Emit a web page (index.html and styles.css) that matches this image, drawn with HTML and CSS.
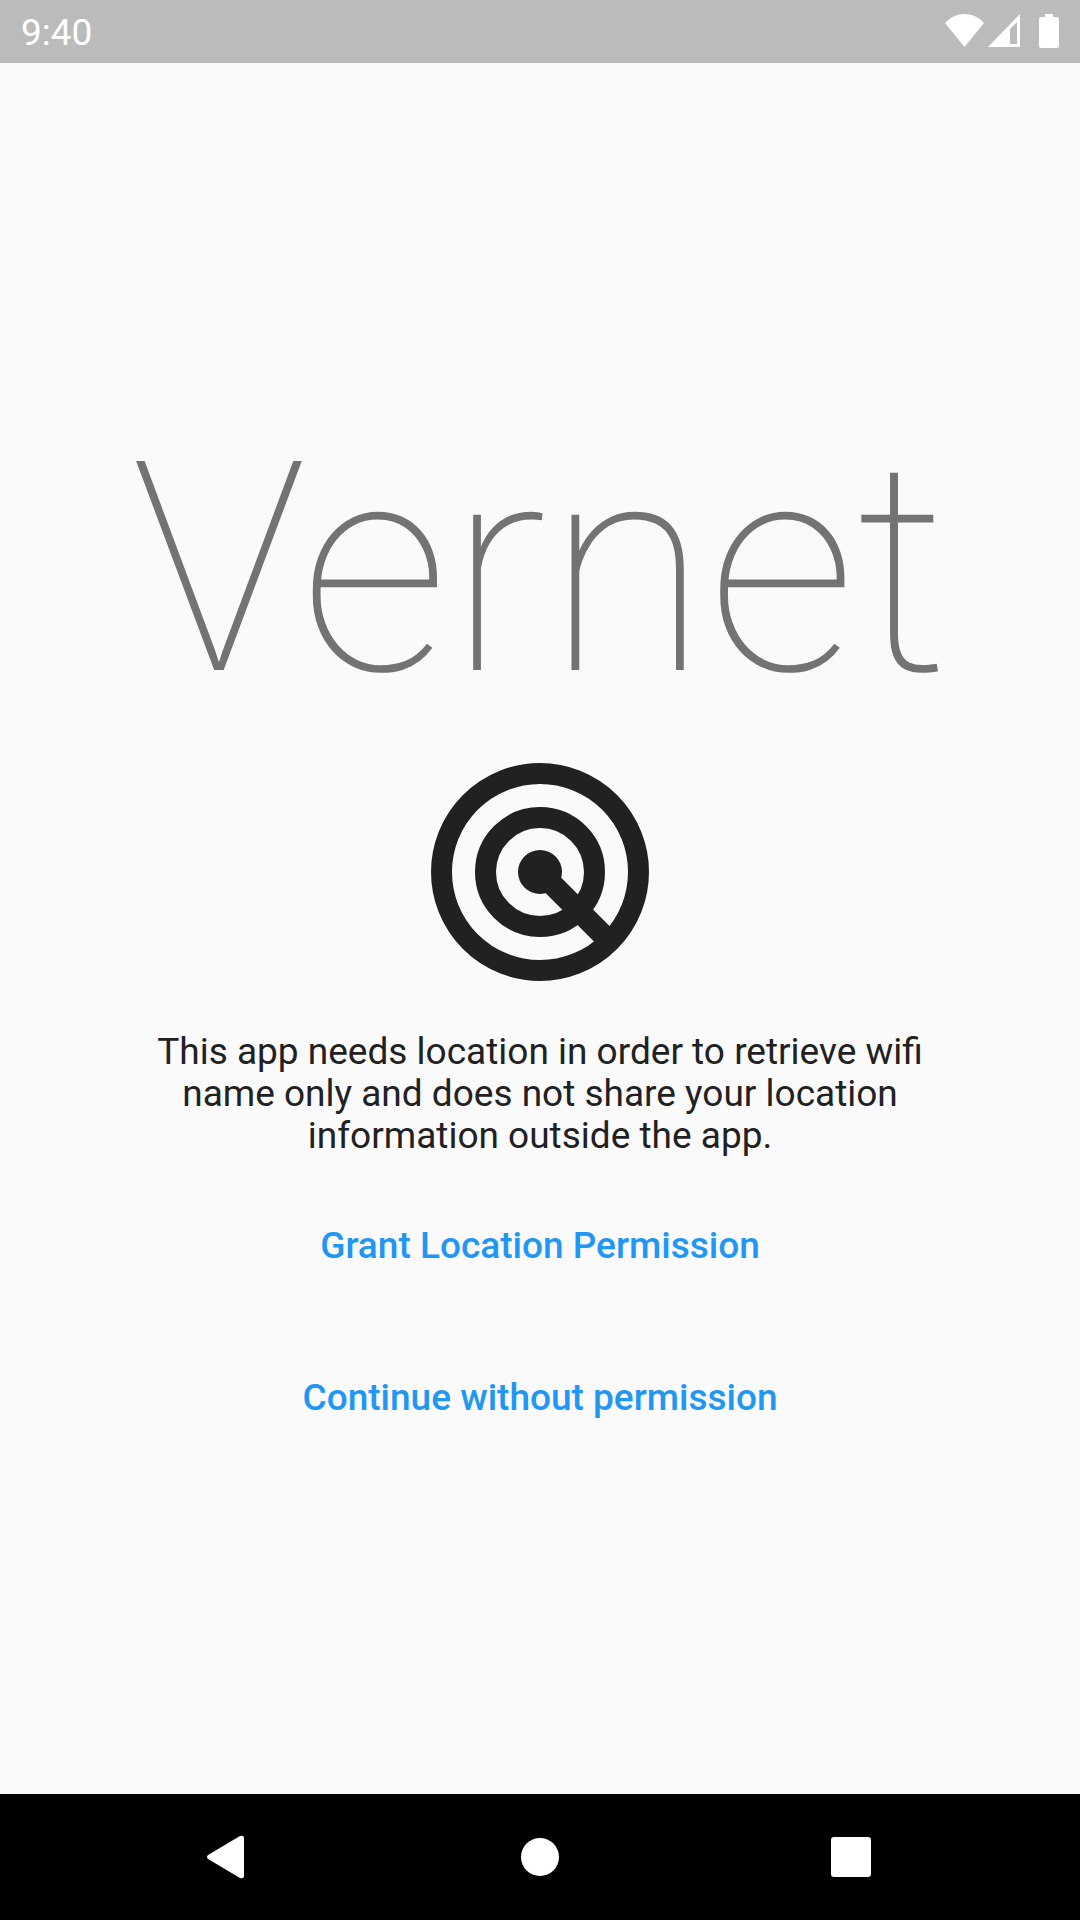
FILE: index.html
```html
<!DOCTYPE html>
<html lang="en">
<head>
<meta charset="utf-8">
<meta name="viewport" content="width=device-width, initial-scale=1">
<title>Vernet</title>
<link rel="stylesheet" href="styles.css">
</head>
<body>
<header class="status">
  <time class="clock">9:40</time>
  <div class="indicators">
    <svg class="wifi" viewBox="0 0 39 33" aria-hidden="true"><path d="M19.500 33 0 9C11-3 28-3 39 9Z"/></svg>
    <svg class="signal" viewBox="0 0 32 33" aria-hidden="true"><path fill-rule="evenodd" d="M0 33 32 0V33ZM22 15V30H29V8Z"/></svg>
    <svg class="battery" viewBox="0 0 20 34" aria-hidden="true"><path d="M6 0h8v3h4q2 0 2 2v27q0 2-2 2H2q-2 0-2-2V5q0-2 2-2h4Z"/></svg>
  </div>
</header>
<main class="content">
  <h1 class="title">Vernet</h1>
  <svg class="logo" viewBox="0 0 218 218" aria-hidden="true">
    <g fill="none" stroke="currentColor" stroke-width="21">
      <circle cx="109" cy="109" r="98.500"/><circle cx="109" cy="109" r="54.500"/><path stroke-width="22" d="M109 109 174 174"/>
    </g>
    <circle cx="109" cy="109" r="22" fill="currentColor"/>
  </svg>
  <p class="message">This app needs location in order to retrieve wifi name only and does not share your location information outside the app.</p>
  <div class="actions">
    <button class="action" type="button">Grant Location Permission</button>
    <button class="action" type="button">Continue without permission</button>
  </div>
</main>
<nav class="navbar" aria-label="System">
  <button class="nav" type="button" aria-label="Back"><svg viewBox="0 0 44 44" aria-hidden="true"><path d="M2 20 34 1q4-1 4 2v38q0 3-4 2L2 24q-2-2 0-4Z"/></svg></button>
  <button class="nav" type="button" aria-label="Home"><svg viewBox="0 0 44 44" aria-hidden="true"><circle cx="22" cy="22" r="19"/></svg></button>
  <button class="nav" type="button" aria-label="Recent apps"><svg viewBox="0 0 44 44" aria-hidden="true"><rect x="1" y="2" width="40" height="40" rx="3"/></svg></button>
</nav>
</body>
</html>
```
FILE: styles.css
```css
* { box-sizing: border-box; }
body { margin: 0; min-height: 100vh; display: flex; flex-direction: column; background: #fafafa; color: #212121; font-family: Roboto, sans-serif; }
.status { padding: 0 21px; display: flex; justify-content: space-between; background: #bbb; color: #fff; }
.clock { font-size: 37px; line-height: 61px; padding-top: 2px; }
.indicators { display: flex; align-items: flex-start; padding-top: 14px; fill: currentColor; }
.wifi { width: 39px; height: 33px; }
.signal { width: 32px; height: 33px; margin-left: 4px; }
.battery { width: 20px; height: 34px; margin-left: 19px; }
.content { flex: 1; display: flex; flex-direction: column; align-items: center; justify-content: center; padding: 0 132px 13px; }
.title { margin: 0 0 21px; font-size: 294px; line-height: 344px; font-weight: 100; color: #737373; }
.logo { width: 218px; height: 218px; display: block; }
.message { margin: 50px 0 41px; font-size: 37px; line-height: 42px; text-align: center; max-width: 816px; }
.actions { display: flex; flex-direction: column; align-items: center; gap: 56px; }
.action { height: 96px; padding: 0 24px; border: 0; background: none; color: #2196f3; font: 500 37px/42px Roboto, sans-serif; }
.navbar { height: 126px; padding: 0 72px; display: flex; justify-content: space-around; align-items: center; background: #000; }
.nav { padding: 0; width: 44px; height: 44px; border: 0; background: none; }
.nav svg { display: block; width: 44px; height: 44px; fill: #fff; }
```
